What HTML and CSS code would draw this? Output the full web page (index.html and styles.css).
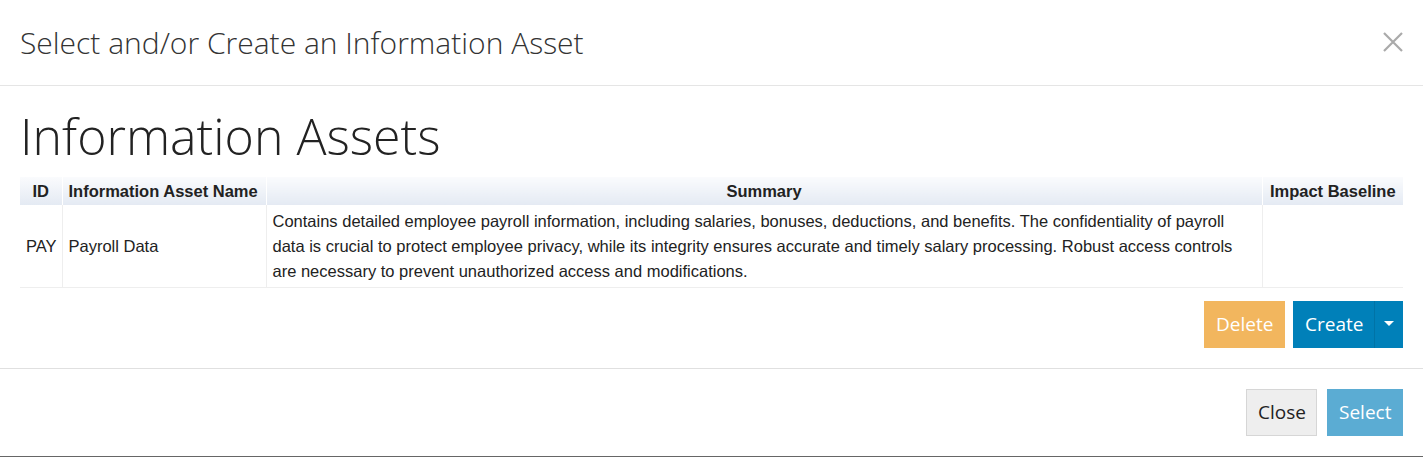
FILE: index.html
```html
<!DOCTYPE html>
<html lang="en">

<head>
    <meta charset="UTF-8">
    <meta name="viewport" content="width=device-width, initial-scale=1.0">
    <title>Select and/or Create an Information Asset</title>
    <link rel="stylesheet" href="styles.css">
</head>

<body>
    <div class="modal">
        <header class="modal-header">
            <h4 class="modal-title">Select and/or Create an Information Asset</h4>
            <button class="close-x" aria-label="Close">
                <svg width="20" height="20" viewBox="0 0 20 20">
                    <path d="M1 1 L19 19 M19 1 L1 19" stroke="#aaa" stroke-width="2.2" fill="none" />
                </svg>
            </button>
        </header>

        <main class="modal-body">
            <h1 class="page-title">Information Assets</h1>
            <table class="asset-table">
                <colgroup>
                    <col class="col-id">
                    <col class="col-name">
                    <col>
                    <col class="col-impact">
                </colgroup>
                <thead>
                    <tr>
                        <th>ID</th>
                        <th class="left">Information Asset Name</th>
                        <th>Summary</th>
                        <th>Impact Baseline</th>
                    </tr>
                </thead>
                <tbody>
                    <tr>
                        <td class="center">PAY</td>
                        <td>Payroll Data</td>
                        <td>Contains detailed employee payroll information, including salaries, bonuses, deductions, and benefits. The confidentiality of payroll data is crucial to protect employee privacy, while its integrity ensures accurate and timely salary processing. Robust access controls are necessary to prevent unauthorized access and modifications.</td>
                        <td></td>
                    </tr>
                </tbody>
            </table>

            <div class="table-actions">
                <button class="btn btn-warning">Delete</button>
                <div class="btn-group">
                    <button class="btn btn-primary">Create</button>
                    <button class="btn btn-primary caret-btn"><span class="caret"></span></button>
                </div>
            </div>
        </main>

        <footer class="modal-footer">
            <button class="btn btn-default">Close</button>
            <button class="btn btn-info">Select</button>
        </footer>
    </div>
</body>

</html>
```

FILE: styles.css
```css
body {
    margin: 0;
    padding: 0;
    font-family: 'Open Sans', sans-serif;
    background: #fff;
    color: #333;
}

.modal {
    height: 457px;
    box-sizing: border-box;
    border-bottom: 1px solid #666;
    display: flex;
    flex-direction: column;
}

.modal-header {
    display: flex;
    justify-content: space-between;
    align-items: center;
    padding: 20px;
    border-bottom: 1px solid #e5e5e5;
}

.modal-title {
    margin: 0;
    font-size: 30px;
    font-weight: 300;
    line-height: 45px;
    color: #333;
}

.close-x {
    background: none;
    border: none;
    padding: 0;
    margin-top: -2px;
    width: 20px;
    height: 20px;
    cursor: pointer;
}

.close-x svg {
    display: block;
}

.modal-body {
    padding: 0 20px;
}

.page-title {
    margin: 25px 0 16px;
    font-size: 50px;
    font-weight: 300;
    line-height: 50px;
    color: #222;
}

.asset-table {
    width: 100%;
    border-collapse: collapse;
    table-layout: fixed;
    font-family: 'Liberation Sans', Arial, sans-serif;
    font-size: 16.5px;
    color: #222;
}

.col-id {
    width: 42px;
}

.col-name {
    width: 204px;
}

.col-impact {
    width: 141px;
}

.asset-table th {
    background: linear-gradient(#fafbfd, #e4eaf3);
    font-weight: bold;
    line-height: 25px;
    padding: 2px 6px 1px;
    text-align: center;
    border-left: 1px solid #fff;
    white-space: nowrap;
}

.asset-table th.left {
    text-align: left;
}

.asset-table th:first-child,
.asset-table td:first-child {
    border-left: none;
}

.asset-table td {
    line-height: 25px;
    padding: 4px 6px 3px 6px;
    border-left: 1px solid #eee;
    border-bottom: 1px solid #eee;
    vertical-align: middle;
}

.asset-table td.center {
    text-align: center;
}

.table-actions {
    display: flex;
    justify-content: flex-end;
    gap: 8px;
    margin: 13px 0 20px;
}

.btn {
    font-family: 'Open Sans', sans-serif;
    font-size: 19px;
    line-height: 27px;
    padding: 10px 12px;
    border: none;
    color: #fff;
    cursor: pointer;
}

.btn-warning {
    background: #f2b65e;
    width: 81px;
}

.btn-group {
    display: flex;
}

.btn-primary {
    background: #0080b9;
    width: 81px;
}

.caret-btn {
    width: 29px;
    padding: 10px 0;
    border-left: 1px solid #0073a6;
    display: flex;
    align-items: center;
    justify-content: center;
}

.caret {
    display: block;
    width: 0;
    height: 0;
    border-left: 5px solid transparent;
    border-right: 5px solid transparent;
    border-top: 5px solid #fff;
    margin-top: -2px;
}

.modal-footer {
    display: flex;
    justify-content: flex-end;
    gap: 10px;
    padding: 20px;
    border-top: 1px solid #e0e0e0;
    margin-top: auto;
}

.btn-default {
    background: #eee;
    color: #222;
    border: 1px solid #d6d6d6;
    padding: 9px 11px;
    width: 71px;
}

.btn-info {
    background: #5bacd3;
    width: 76px;
}
```
